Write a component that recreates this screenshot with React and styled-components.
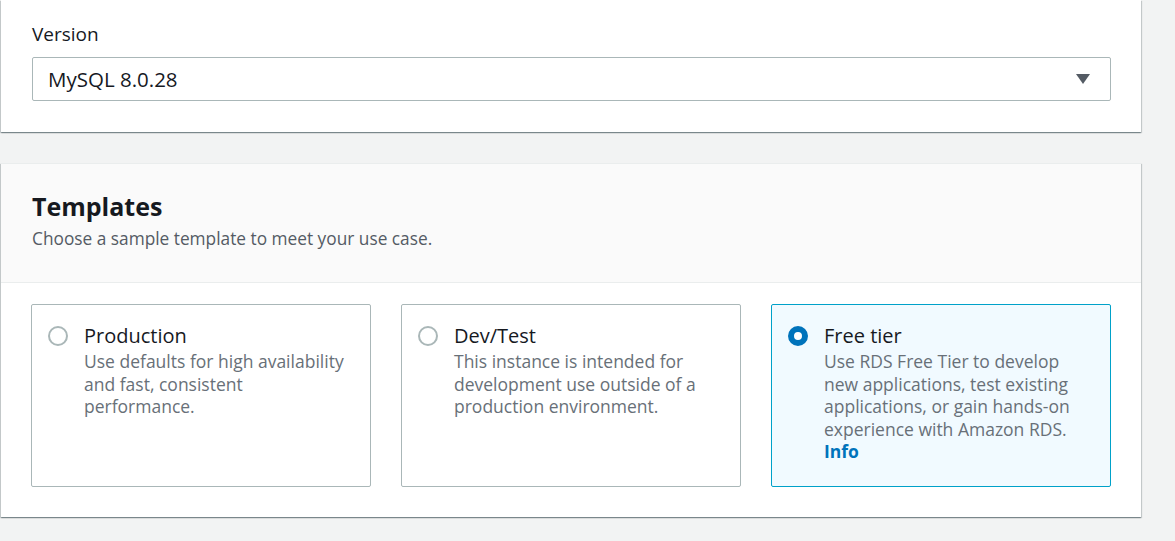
import React, { useState } from 'react';
import styled, { createGlobalStyle } from 'styled-components';

const GlobalStyle = createGlobalStyle`
  html, body {
    margin: 0;
    padding: 0;
    background: #f2f3f3;
    font-family: "Open Sans", "Noto Sans", Arial, sans-serif;
    color: #16191f;
  }
`;

const Page = styled.div`
  display: flex;
  flex-direction: column;
  gap: 31px;
  padding: 0 34px 24px 1px;
`;

const Panel = styled.section`
  background: #ffffff;
  box-shadow: 0 1px 1px 0 rgba(0, 28, 36, 0.3), 1px 1px 1px 0 rgba(0, 28, 36, 0.15),
    -1px 1px 1px 0 rgba(0, 28, 36, 0.15);
  border-top: ${(p) => (p.$topLine ? '1px solid #eaeded' : 'none')};
`;

const FieldBody = styled.div`
  padding: 21px 30px 31px 31px;
`;

const Label = styled.label`
  display: block;
  font-size: 19px;
  line-height: 26px;
  color: #16191f;
  margin-bottom: 10px;
`;

const Select = styled.div`
  display: flex;
  align-items: center;
  justify-content: space-between;
  height: 44px;
  box-sizing: border-box;
  border: 1px solid #aab7b8;
  border-radius: 2px;
  padding: 0 19px 0 15px;
  font-size: 20.5px;
  color: #16191f;
`;

const PanelHeader = styled.header`
  background: #fafafa;
  border-bottom: 1px solid #eaeded;
  padding: 26px 31px 31px;
`;

const Heading = styled.h2`
  margin: 0;
  font-size: 25px;
  line-height: 32px;
  font-weight: 700;
  color: #16191f;
`;

const Subtitle = styled.p`
  margin: 5px 0 0;
  font-size: 17.3px;
  line-height: 24px;
  color: #545b64;
`;

const CardGrid = styled.div`
  display: grid;
  grid-template-columns: repeat(3, 1fr);
  gap: 30px;
  padding: 21px 30px 30px 30px;
`;

const Card = styled.label`
  display: flex;
  gap: 16px;
  min-height: 183px;
  box-sizing: border-box;
  padding: 19px 16px 16px 16px;
  border: 1px solid ${(p) => (p.$selected ? '#00a1c9' : '#aab7b8')};
  background: ${(p) => (p.$selected ? '#f1faff' : '#ffffff')};
  border-radius: 2px;
  cursor: pointer;
`;

const Radio = styled.span`
  flex: none;
  width: 20px;
  height: 20px;
  margin-top: 2px;
  box-sizing: border-box;
  border-radius: 50%;
  border: ${(p) => (p.$checked ? '6px solid #0073bb' : '2px solid #aab7b8')};
  background: #ffffff;
`;

const CardText = styled.div`
  display: flex;
  flex-direction: column;
`;

const CardTitle = styled.span`
  font-size: 20px;
  line-height: 24px;
  color: #16191f;
`;

const CardDesc = styled.span`
  margin-top: 2px;
  font-size: 17.5px;
  line-height: 22.5px;
  color: #687078;
`;

const InfoLink = styled.a`
  display: block;
  font-weight: 700;
  color: #0073bb;
  text-decoration: none;
`;

const Caret = () => (
  <svg width="16" height="12" viewBox="0 0 16 12">
    <path d="M1 1h14L8 11z" fill="#545b64" />
  </svg>
);

const templates = [
  {
    id: 'prod',
    title: 'Production',
    desc: 'Use defaults for high availability and fast, consistent performance.',
  },
  {
    id: 'dev',
    title: 'Dev/Test',
    desc: 'This instance is intended for development use outside of a production environment.',
  },
  {
    id: 'free',
    title: 'Free tier',
    desc: 'Use RDS Free Tier to develop new applications, test existing applications, or gain hands-on experience with Amazon RDS.',
    info: true,
  },
];

export default function App() {
  const [selected, setSelected] = useState('free');

  return (
    <Page>
      <GlobalStyle />
      <Panel>
        <FieldBody>
          <Label>Version</Label>
          <Select>
            <span>MySQL 8.0.28</span>
            <Caret />
          </Select>
        </FieldBody>
      </Panel>
      <Panel $topLine>
        <PanelHeader>
          <Heading>Templates</Heading>
          <Subtitle>Choose a sample template to meet your use case.</Subtitle>
        </PanelHeader>
        <CardGrid>
          {templates.map((t) => (
            <Card key={t.id} $selected={selected === t.id} onClick={() => setSelected(t.id)}>
              <Radio $checked={selected === t.id} />
              <CardText>
                <CardTitle>{t.title}</CardTitle>
                <CardDesc>
                  {t.desc}
                  {t.info && <InfoLink href="#">Info</InfoLink>}
                </CardDesc>
              </CardText>
            </Card>
          ))}
        </CardGrid>
      </Panel>
    </Page>
  );
}
